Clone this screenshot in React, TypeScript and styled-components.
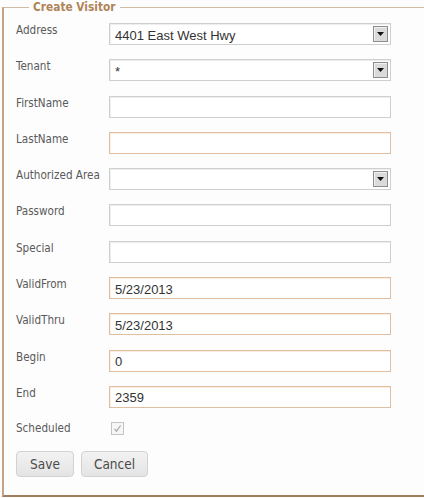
import styled, { createGlobalStyle } from 'styled-components'

const Global = createGlobalStyle`
  html, body {
    margin: 0;
    padding: 0;
    background: #fdfdfd;
    overflow: hidden;
  }
`

type Field = {
  label: string
  value?: string
  kind?: 'text' | 'select'
  required?: boolean
}

const fields: Field[] = [
  { label: 'Address', value: '4401 East West Hwy', kind: 'select' },
  { label: 'Tenant', value: '*', kind: 'select' },
  { label: 'FirstName' },
  { label: 'LastName', required: true },
  { label: 'Authorized Area', kind: 'select' },
  { label: 'Password' },
  { label: 'Special' },
  { label: 'ValidFrom', value: '5/23/2013', required: true },
  { label: 'ValidThru', value: '5/23/2013', required: true },
  { label: 'Begin', value: '0', required: true },
  { label: 'End', value: '2359', required: true },
]

export default function App() {
  return (
    <>
      <Global />
      <Frame>
        <Legend>Create Visitor</Legend>
        <Form>
          {fields.map((f) => (
            <Row key={f.label}>
              <Label>{f.label}</Label>
              <Box required={!!f.required}>
                <BoxText>{f.value}</BoxText>
                {f.kind === 'select' && (
                  <DropButton>
                    <svg width="7" height="4" viewBox="0 0 7 4">
                      <path d="M0 0h7L3.5 4z" fill="#111" />
                    </svg>
                  </DropButton>
                )}
              </Box>
            </Row>
          ))}
          <CheckRow>
            <Label>Scheduled</Label>
            <Check>
              <svg width="9" height="9" viewBox="0 0 9 9">
                <path d="M1.5 4.8l2 2.4L7.6 1.5" fill="none" stroke="#a8a8a8" strokeWidth="1.2" />
              </svg>
            </Check>
          </CheckRow>
          <Buttons>
            <Button w={58}>Save</Button>
            <Button w={67}>Cancel</Button>
          </Buttons>
        </Form>
      </Frame>
    </>
  )
}

const Frame = styled.fieldset`
  margin: 0 0 0 2px;
  width: 450px;
  box-sizing: border-box;
  padding: 9px 0 17px 12px;
  border: 1px solid #d3bba3;
  border-left: 2px solid #c4a485;
  border-bottom: 2px solid #a17d5c;
  min-height: 497px;
`

const Legend = styled.legend`
  margin-left: 13px;
  padding: 0 4px 0 4px;
  font-family: 'DejaVu Sans Condensed', 'DejaVu Sans', sans-serif;
  font-stretch: condensed;
  font-weight: bold;
  font-size: 11.8px;
  line-height: 14px;
  color: #b08458;
`

const Form = styled.div`
  display: flex;
  flex-direction: column;
  row-gap: 14.3px;
`

const Row = styled.div`
  display: flex;
  align-items: flex-start;
  height: 22px;
`

const Label = styled.div`
  width: 93px;
  padding-top: 1px;
  font-family: 'DejaVu Sans Condensed', 'DejaVu Sans', sans-serif;
  font-stretch: condensed;
  font-size: 11.6px;
  line-height: 13px;
  color: #5a5a5a;
`

const Box = styled.div<{ required: boolean }>`
  width: 282px;
  height: 22px;
  box-sizing: border-box;
  display: flex;
  align-items: center;
  justify-content: space-between;
  padding: 0 2px 0 5px;
  background: #fff;
  border: 1px solid ${({ required }) => (required ? '#dfbf9f' : '#cfcfcf')};
  box-shadow: inset 1px 1px 0 ${({ required }) => (required ? '#fbeee0' : '#eeeeee')};
`

const BoxText = styled.span`
  font-family: 'Liberation Sans', Arial, sans-serif;
  font-size: 13px;
  color: #333;
  padding-top: 2px;
`

const DropButton = styled.span`
  width: 15px;
  height: 16px;
  box-sizing: border-box;
  display: flex;
  align-items: center;
  justify-content: center;
  background: #dadada;
  border: 1px solid #8c8c8c;
  box-shadow: inset 1px 1px 0 #f2f2f2;
`

const CheckRow = styled.div`
  display: flex;
  align-items: center;
  height: 14px;
  margin-top: -1px;
`

const Check = styled.span`
  width: 13px;
  height: 13px;
  margin-left: 2px;
  box-sizing: border-box;
  display: flex;
  align-items: center;
  justify-content: center;
  background: #f6f6f6;
  border: 1px solid #c4c4c4;
`

const Buttons = styled.div`
  display: flex;
  gap: 7px;
  margin-top: 1px;
`

const Button = styled.button<{ w: number }>`
  width: ${({ w }) => w}px;
  height: 26px;
  padding: 0;
  border: 1px solid #d2d2d2;
  border-radius: 4px;
  background: linear-gradient(#f2f2f2, #e4e4e4);
  font-family: 'DejaVu Sans Condensed', 'DejaVu Sans', sans-serif;
  font-stretch: condensed;
  font-size: 13.5px;
  color: #4a4a4a;
`
